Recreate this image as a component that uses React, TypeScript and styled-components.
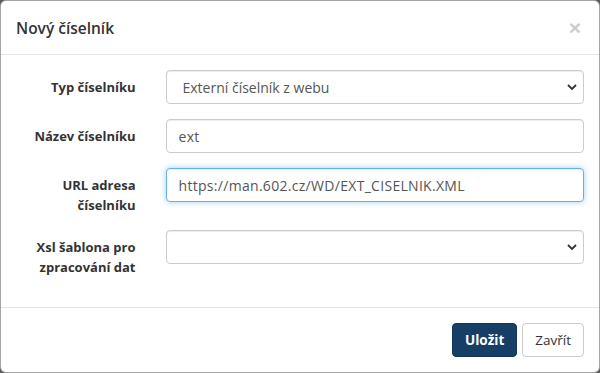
import React from "react";
import styled, { createGlobalStyle } from "styled-components";

const GlobalStyle = createGlobalStyle`
  html, body {
    margin: 0;
    padding: 0;
    background: #5a5a5a;
  }
  * {
    box-sizing: border-box;
  }
`;

const Modal = styled.div`
  width: 600px;
  height: 373px;
  background: #fff;
  border: 1px solid rgba(0, 0, 0, 0.35);
  border-radius: 6px;
  font-family: "Open Sans", "Liberation Sans", sans-serif;
  color: #333;
  display: flex;
  flex-direction: column;
  overflow: hidden;
`;

const Header = styled.div`
  display: flex;
  align-items: center;
  justify-content: space-between;
  height: 54px;
  padding: 0 15px;
  border-bottom: 1px solid #e5e5e5;
`;

const Title = styled.h4`
  margin: 0;
  font-size: 15.5px;
  font-weight: 600;
  color: #333;
`;

const CloseButton = styled.button`
  background: none;
  border: none;
  padding: 0;
  margin-right: 3px;
  font-size: 21px;
  font-weight: bold;
  line-height: 1;
  color: #000;
  opacity: 0.2;
  font-family: "Liberation Sans", sans-serif;
  cursor: pointer;
`;

const Body = styled.div`
  flex: 1;
  padding: 15px 0 0;
`;

const FormRow = styled.div`
  display: grid;
  grid-template-columns: 25% 75%;
  margin-bottom: 15px;
`;

const Label = styled.label`
  padding: 7px 15px 0;
  text-align: right;
  font-size: 13px;
  font-weight: 700;
  line-height: 20px;
  color: #333;
`;

const Control = styled.div`
  position: relative;
  padding: 0 15px;
`;

const Input = styled.input<{ $focused?: boolean }>`
  display: block;
  width: 100%;
  height: 34px;
  padding: 6px 12px;
  font-family: inherit;
  font-size: 14px;
  letter-spacing: 0.3px;
  color: #555;
  background: #fff;
  border: 1px solid ${(p) => (p.$focused ? "#66afe9" : "#ccc")};
  border-radius: 4px;
  outline: none;
  box-shadow: ${(p) =>
    p.$focused
      ? "inset 0 1px 1px rgba(0,0,0,.075), 0 0 6px rgba(102,175,233,.6)"
      : "inset 0 1px 1px rgba(0,0,0,.075)"};
`;

const Select = styled.select`
  display: block;
  width: 100%;
  height: 34px;
  padding: 6px 12px 6px 16px;
  font-family: inherit;
  font-size: 14px;
  color: #555;
  background: #fff;
  border: 1px solid #ccc;
  border-radius: 4px;
  outline: none;
  appearance: none;
  box-shadow: inset 0 1px 1px rgba(0, 0, 0, 0.075);
`;

const Chevron = styled.svg`
  position: absolute;
  right: 22px;
  top: 13px;
  pointer-events: none;
`;

const Footer = styled.div`
  display: flex;
  justify-content: flex-end;
  gap: 5px;
  padding: 15px;
  border-top: 1px solid #e5e5e5;
`;

const Button = styled.button<{ $primary?: boolean }>`
  height: 34px;
  padding: 0 12px;
  font-family: inherit;
  font-size: 13.5px;
  font-weight: ${(p) => (p.$primary ? 700 : 400)};
  color: ${(p) => (p.$primary ? "#fff" : "#333")};
  background: ${(p) => (p.$primary ? "#173f65" : "#fff")};
  border: 1px solid ${(p) => (p.$primary ? "#12355a" : "#ccc")};
  border-radius: 4px;
  cursor: pointer;
`;

const SelectBox = ({ value }: { value: string }) => (
  <Control>
    <Select defaultValue={value}>
      <option value={value}>{value}</option>
    </Select>
    <Chevron width="10" height="8" viewBox="0 0 10 8">
      <path d="M1 2 L5 6 L9 2" fill="none" stroke="#333" strokeWidth="1.8" />
    </Chevron>
  </Control>
);

export default function App() {
  return (
    <>
      <GlobalStyle />
      <Modal>
        <Header>
          <Title>Nový číselník</Title>
          <CloseButton>×</CloseButton>
        </Header>
        <Body>
          <FormRow>
            <Label>Typ číselníku</Label>
            <SelectBox value="Externí číselník z webu" />
          </FormRow>
          <FormRow>
            <Label>Název číselníku</Label>
            <Control>
              <Input defaultValue="ext" />
            </Control>
          </FormRow>
          <FormRow>
            <Label>
              URL adresa
              <br />
              číselníku
            </Label>
            <Control>
              <Input $focused defaultValue="https://man.602.cz/WD/EXT_CISELNIK.XML" />
            </Control>
          </FormRow>
          <FormRow>
            <Label>
              Xsl šablona pro
              <br />
              zpracování dat
            </Label>
            <SelectBox value="" />
          </FormRow>
        </Body>
        <Footer>
          <Button $primary>Uložit</Button>
          <Button>Zavřít</Button>
        </Footer>
      </Modal>
    </>
  );
}
